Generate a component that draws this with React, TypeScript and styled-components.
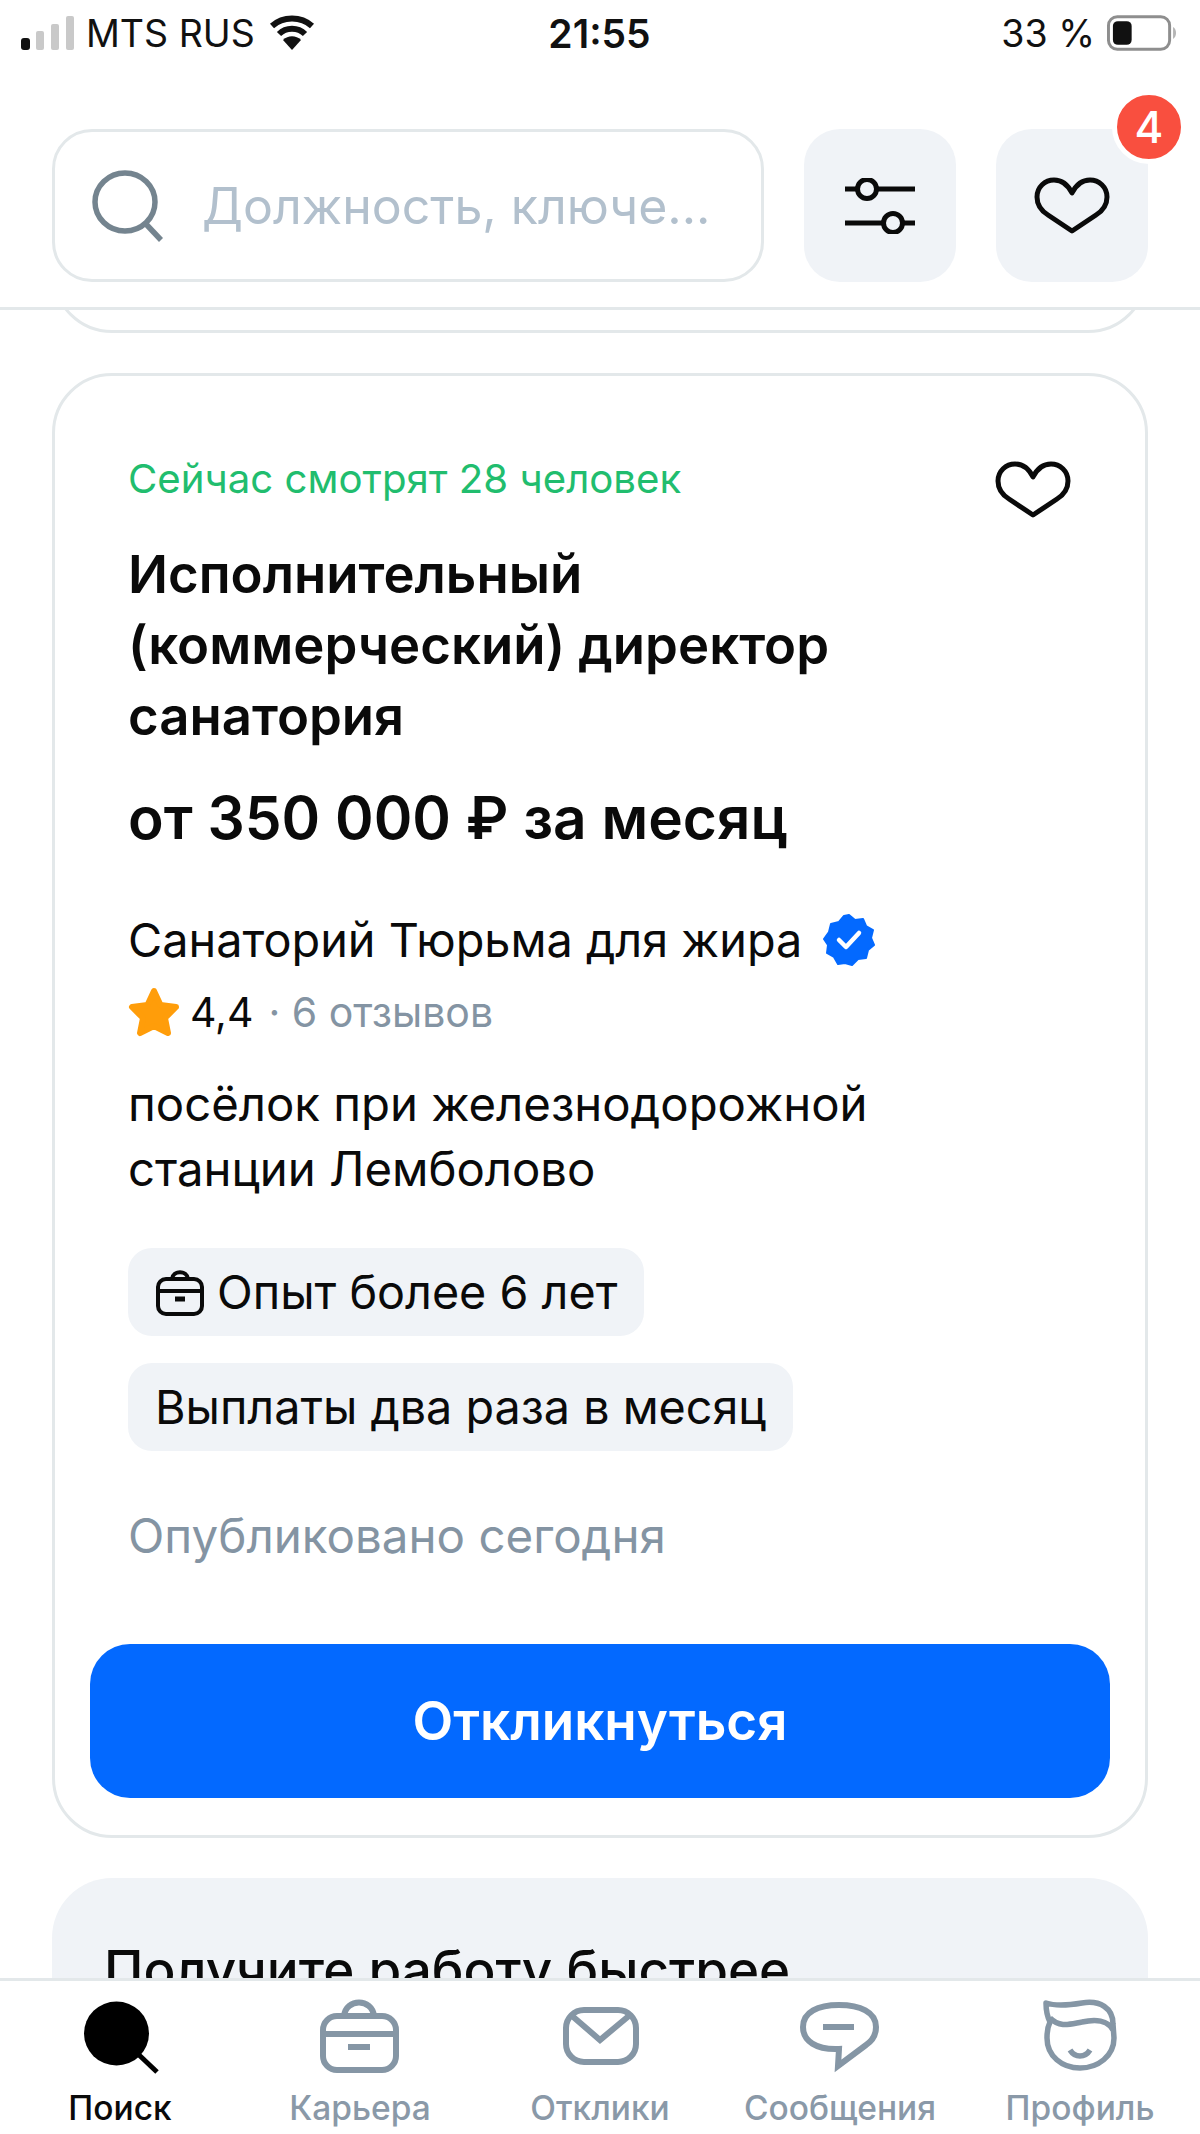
import React, { FC } from 'react';
import styled, { createGlobalStyle } from 'styled-components';

const GlobalStyle = createGlobalStyle`
    html, body {
        margin: 0;
        padding: 0;
        background: #fff;
    }
    * {
        box-sizing: border-box;
    }
`;

const Page = styled.div`
    width: 1200px;
    height: 2134px;
    display: flex;
    flex-direction: column;
    overflow: hidden;
    font-family: Inter, "Liberation Sans", sans-serif;
    color: #0a0a0a;
    background: #fff;
`;

const StatusBar = styled.div`
    height: 66px;
    flex: none;
    padding: 0 22px 0 21px;
    display: grid;
    grid-template-columns: 1fr auto 1fr;
    align-items: center;
    font-size: 37.5px;
    color: #111;
`;

const StatusLeft = styled.div`
    display: flex;
    align-items: center;
    gap: 12px;
`;

const StatusRight = styled.div`
    display: flex;
    align-items: center;
    justify-content: flex-end;
    gap: 12px;
`;

const Clock = styled.div`
    font-size: 39px;
    font-weight: 600;
`;

const SearchBar = styled.div`
    height: 244px;
    flex: none;
    padding: 63px 52px 0;
    display: flex;
    gap: 40px;
    border-bottom: 3px solid #e3e8ea;
`;

const SearchField = styled.div`
    flex: 1;
    height: 153px;
    border: 3px solid #e3e8ea;
    border-radius: 40px;
    display: flex;
    align-items: center;
    gap: 38px;
    padding-left: 37px;
    color: #b2c0cd;
    font-size: 50px;
    white-space: nowrap;
`;

const SquareButton = styled.div`
    position: relative;
    width: 152px;
    height: 153px;
    flex: none;
    border-radius: 36px;
    background: #f0f3f7;
    display: flex;
    align-items: center;
    justify-content: center;
`;

const Badge = styled.div`
    position: absolute;
    top: -39px;
    right: -38px;
    width: 74px;
    height: 74px;
    border: 5px solid #fff;
    border-radius: 50%;
    background: #f94f3f;
    color: #fff;
    font-size: 44px;
    font-weight: 500;
    display: flex;
    align-items: center;
    justify-content: center;
`;

const Feed = styled.div`
    flex: 1;
    min-height: 0;
    overflow: hidden;
    padding: 0 52px;
    display: flex;
    flex-direction: column;
    gap: 40px;
`;

const PreviousCard = styled.div`
    height: 200px;
    flex: none;
    margin-top: -177px;
    border: 3px solid #e3e8ea;
    border-radius: 60px;
`;

const Card = styled.div`
    flex: none;
    height: 1465px;
    border: 3px solid #e3e8ea;
    border-radius: 60px;
    padding: 0 35px;
    display: flex;
    flex-direction: column;
`;

const CardBody = styled.div`
    padding: 0 38px;
    flex: 1;
    display: flex;
    flex-direction: column;
    align-items: flex-start;
`;

const TopRow = styled.div`
    align-self: stretch;
    height: 85px;
    margin-top: 78px;
    padding-right: 1px;
    display: flex;
    align-items: flex-start;
    justify-content: space-between;
`;

const Watching = styled.div`
    color: #21bd6e;
    font-size: 40.2px;
    line-height: 50px;
`;

const CardHeart = styled.div`
    margin-top: 7px;
    display: flex;
`;

const Title = styled.h1`
    margin: 0;
    font-size: 52.7px;
    line-height: 71px;
    font-weight: 600;
`;

const Salary = styled.div`
    margin-top: 31px;
    font-size: 58.6px;
    line-height: 70px;
    font-weight: 600;
`;

const Company = styled.div`
    margin-top: 57px;
    display: flex;
    align-items: center;
    gap: 21px;
    font-size: 46.8px;
    line-height: 60px;
`;

const Rating = styled.div`
    margin-top: 17px;
    display: flex;
    align-items: center;
    font-size: 41px;
    line-height: 50px;
`;

const Score = styled.span`
    margin-left: 10px;
`;

const Reviews = styled.span`
    margin-left: 15px;
    color: #8494a3;
`;

const Address = styled.div`
    margin-top: 34px;
    font-size: 47.3px;
    line-height: 65px;
`;

const Chips = styled.div`
    margin-top: 47px;
    display: flex;
    flex-direction: column;
    align-items: flex-start;
    gap: 27px;
`;

const Chip = styled.div`
    height: 88px;
    padding: 0 27px;
    border-radius: 24px;
    background: #f0f3f7;
    display: flex;
    align-items: center;
    gap: 12px;
    font-size: 46.7px;
`;

const Published = styled.div`
    margin-top: 55px;
    color: #8494a3;
    font-size: 47.5px;
    line-height: 60px;
`;

const ApplyButton = styled.div`
    height: 154px;
    flex: none;
    margin-bottom: 37px;
    border-radius: 40px;
    background: #0369ff;
    color: #fff;
    font-size: 53px;
    font-weight: 600;
    display: flex;
    align-items: center;
    justify-content: center;
`;

const Promo = styled.div`
    flex: none;
    height: 300px;
    border-radius: 60px;
    background: #f0f3f7;
    padding: 62px 52px 0;
    font-size: 53px;
    line-height: 60px;
    font-weight: 500;
`;

const TabBar = styled.div`
    height: 156px;
    flex: none;
    border-top: 3px solid #e3e8ea;
    background: #fff;
    display: grid;
    grid-template-columns: repeat(5, 240px);
`;

const Tab = styled.div<{ $active?: boolean }>`
    display: flex;
    flex-direction: column;
    align-items: center;
    padding-top: 17px;
    gap: 14px;
    font-size: 33.5px;
    font-weight: 500;
    line-height: 40px;
    color: ${props => (props.$active ? '#0a0a0a' : '#8a99a8')};
`;

const TabIcon = styled.svg`
    width: 80px;
    height: 76px;
    flex: none;
`;

const Heart: FC = () => (
    <svg width="76" height="58" viewBox="0 0 76 58" fill="none" stroke="#0a0a0a" strokeWidth="5" strokeLinejoin="round">
        <path d="M38 54 L 14 38 C 6 33 3 27 3 20 C 3 10 11 3 20 3 C 28 3 34 8 38 16 C 42 8 48 3 56 3 C 65 3 73 10 73 20 C 73 27 70 33 62 38 Z" />
    </svg>
);

const App: FC = () => (
    <Page>
        <GlobalStyle />
        <StatusBar>
            <StatusLeft>
                <svg width="53" height="34" viewBox="0 0 53 34">
                    <rect x="0" y="22" width="9" height="12" rx="3" fill="#111" />
                    <rect x="15" y="15" width="8" height="19" rx="2" fill="#c9c9c9" />
                    <rect x="30" y="8" width="8" height="26" rx="2" fill="#c9c9c9" />
                    <rect x="45" y="0" width="8" height="34" rx="2" fill="#c9c9c9" />
                </svg>
                <span>MTS RUS</span>
                <svg width="50" height="36" viewBox="0 0 46 36" fill="none" stroke="#111" strokeWidth="6">
                    <path d="M3 11 C 14 1 32 1 43 11" />
                    <path d="M10 19 C 17 12 29 12 36 19" />
                    <path d="M23 35 L 14 25 C 19 20 27 20 32 25 Z" fill="#111" stroke="none" />
                </svg>
            </StatusLeft>
            <Clock>21:55</Clock>
            <StatusRight>
                <span>33 %</span>
                <svg width="71" height="36" viewBox="0 0 72 36" fill="none">
                    <rect x="1.5" y="1.5" width="62" height="33" rx="9" stroke="#8e8e8e" strokeWidth="3" />
                    <rect x="6" y="6" width="19" height="24" rx="5" fill="#111" />
                    <path d="M67 12 C 71 14 71 22 67 24 Z" fill="#b5b5b5" />
                </svg>
            </StatusRight>
        </StatusBar>
        <SearchBar>
            <SearchField>
                <svg width="72" height="72" viewBox="0 0 72 72" fill="none" stroke="#74848f" strokeWidth="5.5" style={{ flex: 'none' }}>
                    <ellipse cx="33" cy="32" rx="30" ry="29" />
                    <path d="M53 53 L 69 70" />
                </svg>
                <span>Должность, ключе...</span>
            </SearchField>
            <SquareButton>
                <svg width="70" height="56" viewBox="0 0 70 56" fill="none" stroke="#0a0a0a" strokeWidth="5">
                    <path d="M0 11 H 12 M 32 11 H 70 M 0 45 H 38 M 58 45 H 70" />
                    <circle cx="22" cy="11" r="9.5" />
                    <circle cx="48" cy="45" r="9.5" />
                </svg>
            </SquareButton>
            <SquareButton>
                <Heart />
                <Badge>4</Badge>
            </SquareButton>
        </SearchBar>
        <Feed>
            <PreviousCard />
            <Card>
                <CardBody>
                    <TopRow>
                        <Watching>Сейчас смотрят 28 человек</Watching>
                        <CardHeart>
                            <Heart />
                        </CardHeart>
                    </TopRow>
                    <Title>
                        Исполнительный
                        <br />
                        (коммерческий) директор
                        <br />
                        санатория
                    </Title>
                    <Salary>от 350 000 ₽ за месяц</Salary>
                    <Company>
                        Санаторий Тюрьма для жира
                        <svg width="52" height="52" viewBox="0 0 52 52">
                            <path
                                d="M26 1 L32 6 L40 5 L43 12 L50 16 L48 24 L51 31 L45 36 L43 44 L35 45 L29 51 L22 49 L15 50 L11 43 L4 39 L5 31 L1 25 L6 18 L8 10 L16 8 L21 2 Z"
                                fill="#0369ff"
                                stroke="#0369ff"
                                strokeWidth="2"
                                strokeLinejoin="round"
                            />
                            <path d="M16 26 L23 33 L36 19" fill="none" stroke="#fff" strokeWidth="4.5" strokeLinecap="round" strokeLinejoin="round" />
                        </svg>
                    </Company>
                    <Rating>
                        <svg width="52" height="50" viewBox="0 0 52 50">
                            <path
                                d="M26 4 L32.5 18 L48 20 L37 31 L40 46 L26 39 L12 46 L15 31 L4 20 L19.5 18 Z"
                                fill="#ff9d0a"
                                stroke="#ff9d0a"
                                strokeWidth="6"
                                strokeLinejoin="round"
                            />
                        </svg>
                        <Score>4,4</Score>
                        <Reviews>· 6 отзывов</Reviews>
                    </Rating>
                    <Address>
                        посёлок при железнодорожной
                        <br />
                        станции Лемболово
                    </Address>
                    <Chips>
                        <Chip>
                            <svg width="50" height="50" viewBox="0 0 50 50" fill="none" stroke="#0a0a0a" strokeWidth="4">
                                <path d="M17 12 C 18 3 32 3 33 12" />
                                <rect x="3" y="12" width="44" height="35" rx="8" />
                                <path d="M3 24 H 47" />
                                <path d="M20 32 H 30" strokeWidth="5" />
                            </svg>
                            Опыт более 6 лет
                        </Chip>
                        <Chip>Выплаты два раза в месяц</Chip>
                    </Chips>
                    <Published>Опубликовано сегодня</Published>
                </CardBody>
                <ApplyButton>Откликнуться</ApplyButton>
            </Card>
            <Promo>Получите работу быстрее</Promo>
        </Feed>
        <TabBar>
            <Tab $active>
                <TabIcon viewBox="0 0 80 76">
                    <ellipse cx="36.5" cy="35.5" rx="32.5" ry="32" fill="#000" />
                    <path d="M58 56 L 77 74" stroke="#000" strokeWidth="5" />
                </TabIcon>
                Поиск
            </Tab>
            <Tab>
                <TabIcon viewBox="0 0 80 76" fill="none" stroke="#8596a5" strokeWidth="6">
                    <path d="M24 18 C 26 0 52 0 54 18" />
                    <rect x="3" y="18" width="73" height="54" rx="14" />
                    <path d="M3 36 H 76" />
                    <path d="M28 49 H 50" />
                </TabIcon>
                Карьера
            </Tab>
            <Tab>
                <TabIcon viewBox="0 0 80 76" fill="none" stroke="#8596a5" strokeWidth="6">
                    <rect x="6" y="12" width="70" height="52" rx="18" />
                    <path d="M11 17 L 40 42 L 70 17" />
                </TabIcon>
                Отклики
            </Tab>
            <Tab>
                <TabIcon viewBox="0 0 80 76" fill="none" stroke="#8596a5" strokeWidth="6">
                    <path d="M39 7 C 60 7 76 14 76 29 C 76 37 72 43 66 47 L 38 68 L 39 51 C 16 52 3 43 3 29 C 3 14 18 7 39 7 Z" />
                    <path d="M23 29 H 54" />
                </TabIcon>
                Сообщения
            </Tab>
            <Tab>
                <TabIcon viewBox="0 0 80 76" fill="none" stroke="#8596a5" strokeWidth="5.5" strokeLinejoin="round">
                    <path d="M6 5 C 15 8 30 7 42 5 C 60 2 73 10 73 26 L 74 40 C 74 58 58 70 40 70 C 22 70 7 58 7 40 C 7 33 8 28 10 24 C 7 18 6 12 6 5 Z" />
                    <path d="M10 20 C 20 30 30 26 42 24 C 55 21 68 22 73 32" />
                    <path d="M30 52 C 35 60 45 60 50 52" />
                </TabIcon>
                Профиль
            </Tab>
        </TabBar>
    </Page>
);

export default App;
